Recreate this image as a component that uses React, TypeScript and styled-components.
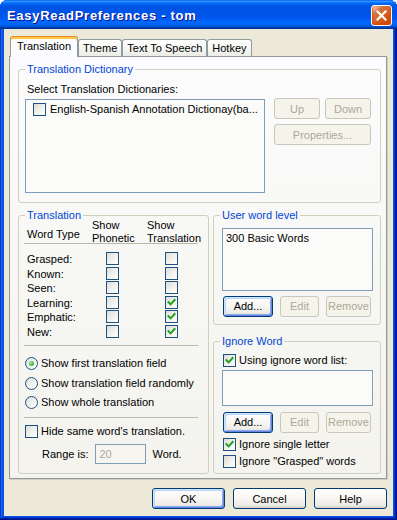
import React from "react";
import styled, { createGlobalStyle, css } from "styled-components";

const FONT = `"Liberation Sans", Arial, sans-serif`;

const GlobalStyle = createGlobalStyle`
  html, body { margin: 0; padding: 0; background: #ffffff; }
  body { font-family: ${FONT}; font-size: 11px; }
  * { box-sizing: border-box; }
`;

const Window = styled.div`
  width: 397px;
  height: 520px;
  display: flex;
  flex-direction: column;
  font-family: ${FONT};
  font-size: 11px;
  color: #000;
  border-radius: 8px 8px 0 0;
  background: #0855dd;
  box-shadow: inset -1px -1px #00138c, inset 1px 1px #0831d9, inset -2px -2px #001ea0,
    inset 2px 2px #166aee, inset -3px -3px #003bda, inset 3px 3px #0855dd;
`;

const TitleBar = styled.div`
  height: 29px;
  flex: none;
  display: flex;
  align-items: center;
  justify-content: space-between;
  padding: 2px 5px 0 7px;
  border-radius: 7px 7px 0 0;
  background: linear-gradient(180deg, #0058ee 0%, #3593ff 4%, #288eff 6%, #127dff 8%,
    #036ffc 10%, #0262ee 14%, #0057e5 20%, #0054e3 24%, #0055eb 56%, #005bf5 66%,
    #026afe 76%, #0062ef 86%, #0052d6 92%, #0040ab 94%, #003092 100%);
`;

const Title = styled.span`
  color: #fff;
  font: bold 13px ${FONT};
  letter-spacing: 0.7px;
  text-shadow: 1px 1px #0f1089;
`;

const CloseButton = styled.div`
  width: 21px;
  height: 21px;
  border: 1px solid #fff;
  border-radius: 3px;
  display: flex;
  align-items: center;
  justify-content: center;
  background: radial-gradient(circle at 90% 90%, #cc4600 0%, #dc6527 55%, #cd7546 70%, #ffccb2 90%, #fff 100%);
  box-shadow: inset 0 -1px 2px 1px #da4600;
`;

const Frame = styled.div`
  flex: 1;
  display: flex;
  flex-direction: column;
  margin: 0 4px 4px 4px;
  background: #ece9d8;
  padding: 7px 6px 7px 5px;
`;

const TabRow = styled.div`
  height: 20px;
  flex: none;
  display: flex;
  align-items: flex-end;
  position: relative;
  z-index: 1;
  padding-left: 1px;
`;

const Tab = styled.div<{ $active?: boolean }>`
  height: 17px;
  padding: 0 4px;
  display: flex;
  align-items: center;
  border: 1px solid #919b9c;
  border-bottom: none;
  border-radius: 3px 3px 0 0;
  background: linear-gradient(180deg, #ffffff 0%, #f7f7f4 50%, #ecebe6 100%);
  white-space: nowrap;
  ${(p) =>
    p.$active &&
    css`
      height: 21px;
      margin-bottom: -1px;
      padding: 0 6px 2px 6px;
      background: #fcfcfe;
      border-top: 1px solid #e68b2c;
      box-shadow: inset 0 2px 0 #ffc73c;
    `}
`;

const Panel = styled.div`
  flex: 1;
  display: flex;
  flex-direction: column;
  border: 1px solid #919b9c;
  background: linear-gradient(180deg, #fcfcfe 0%, #f7f7f4 50%, #f4f3ee 100%);
  box-shadow: 1px 1px 0 #d0cebf;
  padding: 6px 5px 0 8px;
`;

const Group = styled.fieldset<{ $pl: number; $pr: number; $pb: number }>`
  margin: 0;
  min-width: 0;
  border: 1px solid #d0d0bf;
  border-radius: 3px;
  padding: 0 ${(p) => p.$pr}px ${(p) => p.$pb}px ${(p) => p.$pl}px;
  display: flex;
  flex-direction: column;
  & > legend {
    margin-left: ${(p) => 6 - p.$pl}px;
  }
`;

const Legend = styled.legend`
  padding: 0 2px;
  color: #0046d5;
  font-size: 11px;
  line-height: 13px;
`;

const Label = styled.div<{ $mt?: number; $ml?: number }>`
  line-height: 13px;
  margin-top: ${(p) => p.$mt ?? 0}px;
  margin-left: ${(p) => p.$ml ?? 0}px;
  white-space: nowrap;
`;

const ListBox = styled.div<{ $h: number; $mt: number; $w?: number }>`
  height: ${(p) => p.$h}px;
  margin-top: ${(p) => p.$mt}px;
  width: ${(p) => (p.$w ? `${p.$w}px` : "auto")};
  flex: none;
  border: 1px solid #7f9db9;
  background: #fbfbf9;
  padding: 3px 0 0 3px;
`;

const ListItem = styled.div`
  display: flex;
  align-items: center;
  gap: 4px;
  padding-left: 4px;
  line-height: 13px;
  white-space: nowrap;
`;

const DictRow = styled.div`
  display: flex;
  gap: 9px;
`;

const DictButtons = styled.div`
  display: grid;
  grid-template-columns: 46px 46px;
  column-gap: 5px;
  row-gap: 5px;
  margin-top: 2px;
  align-content: start;
`;

const Button = styled.button<{ $default?: boolean; $w: number; $span?: boolean }>`
  width: ${(p) => p.$w}px;
  height: 21px;
  padding: 0;
  font: 11px ${FONT};
  color: #000;
  border: 1px solid #003c74;
  border-radius: 3px;
  background: linear-gradient(180deg, #ffffff 0%, #f6f5f1 55%, #ecebe6 85%, #d6d0c5 100%);
  ${(p) => p.$span && css`grid-column: 1 / span 2;`}
  ${(p) =>
    p.$default &&
    css`
      box-shadow: inset 1px 1px 0 #cee7ff, inset -1px -1px 0 #6982ee, inset 2px 2px 0 #bcd4f6,
        inset -2px -2px 0 #89ade4;
    `}
  &:disabled {
    border-color: #c9c7ba;
    background: #f5f4ea;
    color: #aca899;
    box-shadow: none;
  }
`;

const LowerGrid = styled.div`
  display: grid;
  grid-template-columns: 191px 168px;
  column-gap: 4px;
  margin-top: 6px;
  align-items: stretch;
`;

const RightCol = styled.div`
  display: flex;
  flex-direction: column;
  gap: 10px;
`;

const HeaderGrid = styled.div`
  display: grid;
  grid-template-columns: 65px 55px 1fr;
  height: 24px;
  margin-top: -3px;
  padding-left: 3px;
  line-height: 13px;
`;

const HeadWordType = styled.div`
  margin-top: 9px;
  white-space: nowrap;
`;

const Separator = styled.div<{ $mt?: number }>`
  height: 1px;
  background: #b9b6aa;
  margin-top: ${(p) => p.$mt ?? 0}px;
  flex: none;
`;

const WordRows = styled.div`
  margin-top: 8px;
  padding-left: 3px;
`;

const WordRow = styled.div`
  display: grid;
  grid-template-columns: 65px 55px 1fr;
  height: 14.6px;
  align-items: start;
  line-height: 13px;
`;

const WordLabel = styled.span`
  padding-top: 1px;
`;

const BoxCell = styled.div<{ $offset: number }>`
  padding-left: ${(p) => p.$offset}px;
  display: flex;
`;

const Box = styled.span`
  flex: none;
  width: 13px;
  height: 13px;
  display: inline-flex;
  align-items: center;
  justify-content: center;
  border: 1px solid #1c5180;
  background: linear-gradient(135deg, #dcdcd7 0%, #eeeeea 45%, #ffffff 100%);
`;

const RadioCircle = styled.span<{ $checked?: boolean }>`
  flex: none;
  width: 13px;
  height: 13px;
  border-radius: 50%;
  border: 1px solid #1c5180;
  background: linear-gradient(135deg, #dcdcd7 0%, #eeeeea 45%, #ffffff 100%);
  display: inline-flex;
  align-items: center;
  justify-content: center;
  &::after {
    content: "";
    width: 5px;
    height: 5px;
    border-radius: 50%;
    background: radial-gradient(circle at 35% 35%, #a8eaa4 0%, #4fc64b 45%, #21a121 100%);
    display: ${(p) => (p.$checked ? "block" : "none")};
  }
`;

const RadioList = styled.div`
  margin-top: 8px;
  margin-left: 1px;
`;

const OptionRow = styled.div<{ $h?: number; $mt?: number; $ml?: number }>`
  display: flex;
  align-items: center;
  gap: 3px;
  height: ${(p) => p.$h ?? 13}px;
  margin-top: ${(p) => p.$mt ?? 0}px;
  margin-left: ${(p) => p.$ml ?? 0}px;
  line-height: 13px;
  white-space: nowrap;
`;

const RangeRow = styled.div`
  display: flex;
  align-items: center;
  height: 20px;
  margin-top: 6.5px;
  padding-left: 18px;
`;

const RangeInput = styled.div`
  width: 51px;
  height: 20px;
  margin-left: 7px;
  margin-right: 6px;
  border: 1px solid #7f9db9;
  background: #f6f5f0;
  color: #aca899;
  padding: 3px 0 0 3px;
  line-height: 13px;
`;

const ButtonRow = styled.div<{ $mt: number }>`
  display: flex;
  gap: 7px;
  margin-top: ${(p) => p.$mt}px;
  margin-left: 1px;
`;

const Footer = styled.div`
  display: flex;
  justify-content: flex-end;
  gap: 8px;
  margin-top: 9px;
  flex: none;
`;

function CheckBox({ checked }: { checked?: boolean }) {
  return (
    <Box>
      {checked && (
        <svg width="9" height="9" viewBox="0 0 9 9">
          <path d="M1.5 4.2 L3.6 6.4 L7.6 2" stroke="#21a121" strokeWidth="2" fill="none" strokeLinecap="square" />
        </svg>
      )}
    </Box>
  );
}

const wordTypes: [string, boolean, boolean][] = [
  ["Grasped:", false, false],
  ["Known:", false, false],
  ["Seen:", false, false],
  ["Learning:", false, true],
  ["Emphatic:", false, true],
  ["New:", false, true],
];

const radios: [string, boolean][] = [
  ["Show first translation field", true],
  ["Show translation field randomly", false],
  ["Show whole translation", false],
];

export default function App() {
  return (
    <>
      <GlobalStyle />
      <Window>
        <TitleBar>
          <Title>EasyReadPreferences - tom</Title>
          <CloseButton>
            <svg width="11" height="11" viewBox="0 0 11 11">
              <path d="M1.5 1.5 L9.5 9.5 M9.5 1.5 L1.5 9.5" stroke="#fff" strokeWidth="2.2" strokeLinecap="square" />
            </svg>
          </CloseButton>
        </TitleBar>
        <Frame>
          <TabRow>
            <Tab $active>Translation</Tab>
            <Tab>Theme</Tab>
            <Tab>Text To Speech</Tab>
            <Tab>Hotkey</Tab>
          </TabRow>
          <Panel>
            <Group $pl={6} $pr={7} $pb={9}>
              <Legend>Translation Dictionary</Legend>
              <Label $mt={7} $ml={2}>Select Translation Dictionaries:</Label>
              <DictRow>
                <ListBox $h={94} $mt={3} $w={240}>
                  <ListItem>
                    <CheckBox />
                    <span>English-Spanish Annotation Dictionay(ba...</span>
                  </ListItem>
                </ListBox>
                <DictButtons>
                  <Button $w={46} disabled>Up</Button>
                  <Button $w={46} disabled>Down</Button>
                  <Button $w={97} $span disabled>Properties...</Button>
                </DictButtons>
              </DictRow>
            </Group>
            <LowerGrid>
              <Group $pl={5} $pr={10} $pb={7}>
                <Legend>Translation</Legend>
                <HeaderGrid>
                  <HeadWordType>Word Type</HeadWordType>
                  <div>Show<br />Phonetic</div>
                  <div>Show<br />Translation</div>
                </HeaderGrid>
                <Separator />
                <WordRows>
                  {wordTypes.map(([label, ph, tr]) => (
                    <WordRow key={label}>
                      <WordLabel>{label}</WordLabel>
                      <BoxCell $offset={14}><CheckBox checked={ph} /></BoxCell>
                      <BoxCell $offset={18}><CheckBox checked={tr} /></BoxCell>
                    </WordRow>
                  ))}
                </WordRows>
                <Separator $mt={5.5} />
                <RadioList>
                  {radios.map(([label, on]) => (
                    <OptionRow key={label} $h={19.5}>
                      <RadioCircle $checked={on} />
                      <span>{label}</span>
                    </OptionRow>
                  ))}
                </RadioList>
                <Separator $mt={4.5} />
                <OptionRow $mt={6.5} $ml={1}>
                  <CheckBox />
                  <span>Hide same word's translation.</span>
                </OptionRow>
                <RangeRow>
                  <span>Range is:</span>
                  <RangeInput>20</RangeInput>
                  <span>Word.</span>
                </RangeRow>
              </Group>
              <RightCol>
                <Group $pl={8} $pr={7} $pb={7}>
                  <Legend>User word level</Legend>
                  <ListBox $h={63} $mt={5.5}>
                    <Label>300 Basic Words</Label>
                  </ListBox>
                  <ButtonRow $mt={5}>
                    <Button $w={50} $default>Add...</Button>
                    <Button $w={39} disabled>Edit</Button>
                    <Button $w={45} disabled>Remove</Button>
                  </ButtonRow>
                </Group>
                <Group $pl={8} $pr={7} $pb={5}>
                  <Legend>Ignore Word</Legend>
                  <OptionRow $mt={6} $ml={1}>
                    <CheckBox checked />
                    <span>Using ignore word list:</span>
                  </OptionRow>
                  <ListBox $h={36} $mt={3} />
                  <ButtonRow $mt={6}>
                    <Button $w={50} $default>Add...</Button>
                    <Button $w={39} disabled>Edit</Button>
                    <Button $w={45} disabled>Remove</Button>
                  </ButtonRow>
                  <OptionRow $mt={5} $ml={1}>
                    <CheckBox checked />
                    <span>Ignore single letter</span>
                  </OptionRow>
                  <OptionRow $mt={4.5} $ml={1}>
                    <CheckBox />
                    <span>Ignore "Grasped" words</span>
                  </OptionRow>
                </Group>
              </RightCol>
            </LowerGrid>
          </Panel>
          <Footer>
            <Button $w={73} $default>OK</Button>
            <Button $w={73}>Cancel</Button>
            <Button $w={73}>Help</Button>
          </Footer>
        </Frame>
      </Window>
    </>
  );
}
